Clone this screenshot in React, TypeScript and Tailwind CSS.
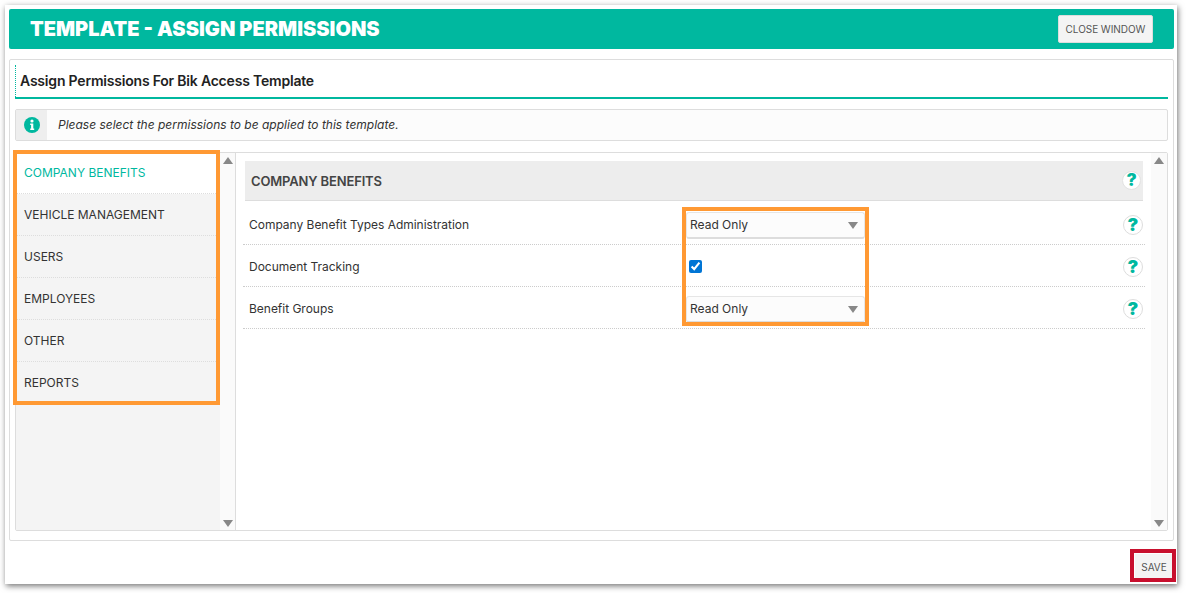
const menuItems = ["COMPANY BENEFITS", "VEHICLE MANAGEMENT", "USERS", "EMPLOYEES", "OTHER", "REPORTS"]

function HelpIcon({ small = false }: { small?: boolean }) {
  return (
    <span
      className={
        small
          ? "flex h-[19px] w-[19px] items-center justify-center rounded-full border border-[#e2e2e2] bg-white text-[17px] font-black leading-none text-[#00b89f]"
          : "flex h-[20px] w-[20px] items-center justify-center rounded-full border border-[#dddddd] bg-white text-[18px] font-black leading-none text-[#00b89f]"
      }
    >
      ?
    </span>
  )
}

function Arrow({ down = false }: { down?: boolean }) {
  return (
    <svg width="10" height="7" viewBox="0 0 10 7" className="shrink-0">
      <path d={down ? "M0 0 H10 L5 7 Z" : "M0 7 H10 L5 0 Z"} fill="#888888" />
    </svg>
  )
}

function ReadOnlySelect() {
  return (
    <div className="mt-[2px] flex h-[27px] w-[179px] items-center justify-between rounded-[3px] border border-b-2 border-[#e6e6e6] border-b-[#dddddd] bg-[#fcfcfc] pl-[3px] pr-[6px]">
      <span>Read Only</span>
      <Arrow down />
    </div>
  )
}

function Row({ label, children }: { label: string; children: React.ReactNode }) {
  return (
    <div className="flex h-[42px] items-center border-b border-dotted border-[#cccccc] pl-[6px] pr-[2px] pt-[2px]">
      <span className="w-[437px] tracking-[-0.02px]">{label}</span>
      <div className="flex w-[179px] items-center">{children}</div>
      <div className="ml-auto pt-[1px]"><HelpIcon /></div>
    </div>
  )
}

export default function App() {
  return (
    <div className="h-[593px] w-[1186px] overflow-hidden bg-white font-['Inter',sans-serif] text-[12px] text-[#333333]">
      <div className="relative ml-[5px] mt-[5px] h-[579px] w-[1172px] bg-white p-[4px] shadow-[1px_2px_6px_rgba(0,0,0,0.55)]">
        <div className="flex h-[40px] w-[1165px] items-center justify-between rounded-[2px] bg-[#00b89f] pl-[21px] pr-[21px]">
          <h1 className="text-[20px] font-black text-white">TEMPLATE - ASSIGN PERMISSIONS</h1>
          <button className="h-[28px] w-[95px] rounded-[2px] border border-[#dddddd] bg-[#f4f4f4] text-[10px] tracking-[-0.05px] text-[#555555]">CLOSE WINDOW</button>
        </div>

        <div className="mt-[10px] h-[482px] w-[1165px] rounded-[2px] border border-[#dddddd] px-[5px] pt-[5px]">
          <div className="h-[34px] w-[1153px] border-b-2 border-[#00b89f]">
            <div className="flex h-full items-center border-l border-dotted border-[#00b89f] pb-[2px] pl-[4px] text-[14px] font-semibold tracking-[-0.2px] text-[#222222]">
              Assign Permissions For Bik Access Template
            </div>
          </div>

          <div className="mt-[10px] flex h-[32px] w-[1153px] items-center rounded-[2px] border border-[#dddddd] bg-[#fcfcfc]">
            <div className="flex h-full w-[31px] items-center justify-center bg-[#eeeeee]">
              <svg width="16" height="16" viewBox="0 0 16 16">
                <circle cx="8" cy="8" r="8" fill="#00b89f" />
                <circle cx="8" cy="4" r="1.6" fill="#ffffff" />
                <path d="M6.2 6.6 H9.3 V11.6 H10.2 V13 H6.2 V11.6 H7.1 V8 H6.2 Z" fill="#ffffff" />
              </svg>
            </div>
            <span className="ml-[11px] text-[12px] italic text-[#333333]">Please select the permissions to be applied to this template.</span>
          </div>

          <div className="mt-[11px] flex h-[379px] w-[1153px] rounded-[2px] border border-[#dddddd]">
            <div className="w-[204px] bg-[#f4f4f4]">
              {menuItems.map((item, i) => (
                <div
                  key={item}
                  className={
                    i === 0
                      ? "flex h-[41px] items-center border-b border-dotted border-[#dddddd] bg-white pl-[8px] text-[#00b89f]"
                      : "flex h-[42px] items-center border-b border-dotted border-[#dddddd] pl-[8px] text-[#333333]"
                  }
                >
                  {item}
                </div>
              ))}
            </div>
            <div className="flex w-[16px] flex-col items-center justify-between border-r border-[#dddddd] bg-[#fafafa] pb-[3px] pt-[4px]">
              <Arrow />
              <Arrow down />
            </div>

            <div className="flex flex-1">
              <div className="w-[915px] pl-[7px] pr-[6px] pt-[8px]">
                <div className="ml-[2px] flex h-[40px] w-[898px] items-center justify-between border-b border-[#dddddd] bg-[#ededed] pl-[6px] pr-[2px] text-[13px] font-semibold tracking-[-0.15px] text-[#444444]">
                  <span className="pt-[2px]">COMPANY BENEFITS</span>
                  <HelpIcon small />
                </div>
                <div className="h-[2px]" />
                <Row label="Company Benefit Types Administration"><ReadOnlySelect /></Row>
                <Row label="Document Tracking">
                  <input type="checkbox" defaultChecked className="ml-[3px] h-[13px] w-[13px] accent-[#0075d5]" />
                </Row>
                <Row label="Benefit Groups"><ReadOnlySelect /></Row>
              </div>
              <div className="flex w-[16px] flex-col items-center justify-between bg-[#fafafa] pb-[3px] pt-[4px]">
                <Arrow />
                <Arrow down />
              </div>
            </div>
          </div>
        </div>

        <div className="mt-[13px] flex justify-end">
          <button className="h-[27px] w-[38px] bg-[#f4f4f4] text-[10px] text-[#555555]">SAVE</button>
        </div>

        {/* annotation boxes from the screenshot */}
        <div className="pointer-events-none absolute left-[8px] top-[145px] h-[255px] w-[207px] border-[4px] border-[#ff9933]" />
        <div className="pointer-events-none absolute left-[677px] top-[202px] h-[119px] w-[187px] border-[4px] border-[#ff9933]" />
        <div className="pointer-events-none absolute left-[1125px] top-[544px] h-[33px] w-[46px] border-[4px] border-[#c8102e]" />
      </div>
    </div>
  )
}
